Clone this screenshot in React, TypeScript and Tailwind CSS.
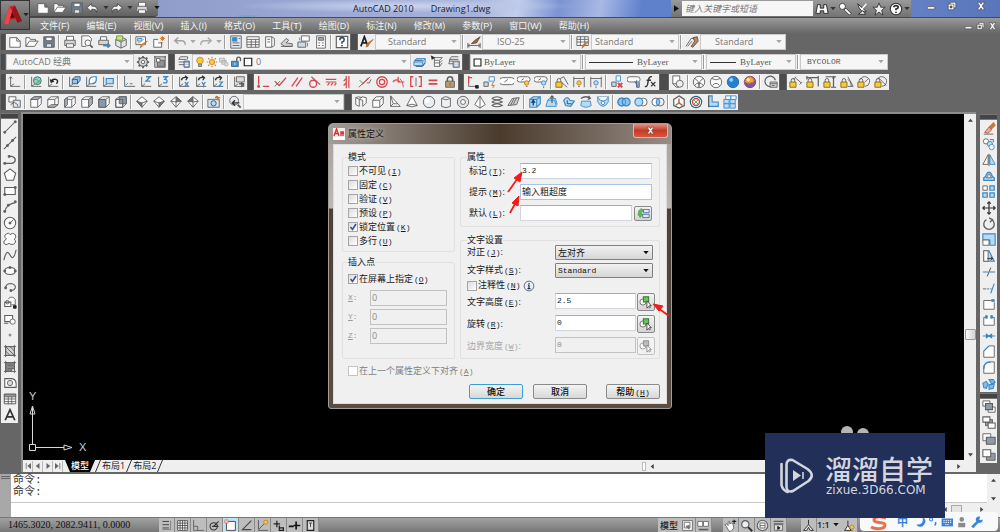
import React from "react";

type Shape = [d: string, stroke?: string, fill?: string, width?: number];

const K = "#5e5e5e";
const W = "#fdfdfd";
const B = "#3c88c6";
const LB = "#b5dbf5";
const R = "#d6464b";
const O = "#c9772c";
const Y = "#f5cb3c";
const G = "#4f9e4a";

const c = (x: number, y: number, r: number) =>
  `M${x - r} ${y}a${r} ${r} 0 1 0 ${2 * r} 0a${r} ${r} 0 1 0 ${-2 * r} 0z`;
const r = (x: number, y: number, w: number, h: number) => `M${x} ${y}h${w}v${h}h${-w}z`;

const axes: Shape = ["M3 2v11h11M3 13l4-3", K];
const lockBody: Shape = [r(1, 8, 7, 6), "#8a6414", Y];
const lockArm: Shape = ["M2.5 8V6a2 2 0 0 1 4 0v2", K];
const bulb = (x: number, y: number): Shape[] => [
  [c(x, y, 2.5), O, Y],
  [`M${x - 1} ${y + 4}h2`, K],
];
const cube: Shape = ["M2 5l4-3h8v8l-4 4H2zM2 5h8v9M10 5l4-3", K, W];

const icons: Record<string, Shape[]> = {
  new: [["M2 3h8l4 4v7H2zM10 3v4h4", K, W]],
  open: [["M1 13V3h4l1 2h6v2M1 13l4-6h10l-4 6z", K, W]],
  save: [["M2 2h12v12H2z", K, "#6c7f99"], [r(4.5, 2.5, 7, 4), K, W], [r(5, 10, 6, 4), K, "#e6e6e6"]],
  print: [["M4 6V1.500h8V6", K, W], ["M2 6h12v6H2z", K, "#d4d4d4"], [r(4, 10, 8, 4), K, W]],
  preview: [["M2 1h8l3 3v3M2 1v12h5", K, W], [c(9, 9, 3.3), K, W], ["M11.500 11.500l3 3", K, "none", 2]],
  publish: [["M4 6V2h7v4", K, W], [r(2, 6, 11, 5), K, "#d4d4d4"], ["M7 12h7M12 9.500l2.500 2.500-2.500 2.500", B, "none", 2]],
  dwf: [["M2 5l6-3 6 3v7l-6 3-6-3z", K, "#dfe6ef"], ["M2 5l6 3v7M8 8l6-3", K], [r(3, 1, 7, 5), G, "#e8d96a"]],
  match: [[r(1, 2, 11, 9), K, W], [r(3, 4, 5, 3), B, LB], ["M14 7l-5 5-3 3 1-4z", O, "#d99a4e"], ["M3 9h3M9 5h1", O]],
  block: [["M2 5v9h9V8M2 5h5M7 9h5", K, W], ["M12 1v6M9 4h6M10 2l4 4M14 2l-4 4", O]],
  undo: [["M6 3L2 6.500 6 10M2 6.500h8q4 0 4 5", "#a2a2a2", "none", 1.6]],
  redo: [["M10 3l4 3.500-4 3.500M14 6.500H6q-4 0-4 5", "#acacac", "none", 1.6]],
  props: [[r(2, 1, 12, 14), K, "#dfeaf5"], [r(4, 3, 5, 4), B, B], ["M4 9h8M4 12h8M11 4h2", K]],
  center: [[r(1, 2, 14, 12), K, W], ["M1 5h14M6 5v9M11 5v9M1 8h14M1 11h14", K]],
  palettes: [["M3 2h7v12H3zM10 2l3 2v8l-3 2", K, W], ["M5 5h3M5 8h3", K]],
  sheets: [["M1 10l6-6 3 2-3 3 7 1v3H5z", K, "#d2d2d2"], ["M1 13h13", K]],
  markup: [[r(5, 1, 9, 6), K, W], [r(1, 8, 9, 6), K, "#c9daea"], ["M12 9v4M3 3v3", B]],
  calc: [[r(3, 1, 10, 14), K, W], [r(5, 3, 6, 3), K, "#9bb0c4"], ["M5 9h2M9 9h2M5 12h2M9 12h2", K]],
  help: [[r(1.5, 1.5, 13, 13), K, W, 1.3], ["M5.500 6q0-3 2.500-3t2.500 2.500Q10.500 7.500 8 8v2M8 11.500v1.500", "#3a4a60", "none", 1.8]],
  textstyle: [["M1 13L5 2l4 11M2.500 9h5", "#222", "none", 2], ["M15 5l-5 6-3 3 1-4z", O, "#b86d35"]],
  dimstyle: [["M1 9v6M15 9v6M1 12h14M3 10.500L1 12l2 1.500M13 10.500l2 1.500-2 1.500", K], ["M15 2L9 6l-4 4 6-1z", "#6b4a33", "#9a6a48"]],
  tablestyle: [[r(1, 2, 13, 10), K, W], ["M1 5h13M5 2v10M10 2v10M1 8h13", K], ["M15 7l-4 4-4 4 1-4z", O, "#b86d35"]],
  mleader: [["M1 13L7 4h3M3 13l5-6", K], ["M9 3l5-1 1 5-6 7-2-1 4-6z", "#6b4a33", "#b88860"]],
  gear: [[c(8, 8, 5), K, "#d8d8d8", 1.3], [c(8, 8, 2), K, W], ["M8 1v2M8 13v2M1 8h2M13 8h2M3 3l1.500 1.500M11.500 11.500L13 13M13 3l-1.500 1.500M4.500 11.500L3 13", K, "none", 2]],
  workspace: [[r(2, 2, 12, 12), K, "#c8c8c8"], [r(5, 6, 8, 7), K, "#8d9298"], [r(4, 4, 4, 4), K, W], ["M1 1l2 2M15 1l-2 2", K]],
  layers: [["M2 5h9M2 8h7M2 11h6M4 2h8M4 2L2 5M12 2v3", K], [r(8, 7, 6, 7), "#47597a", "#9fb4d0"], ["M9 10h4M9 12h4", W]],
  bulb: [[c(8, 6, 4.5), O, Y], [r(6, 11, 4, 3), K, "#b8b8b8"]],
  sun: [[c(8, 8, 3.5), O, Y], ["M8 1v2M8 13v2M1 8h2M13 8h2M3 3l1.500 1.500M11.500 11.500L13 13M13 3l-1.500 1.500M4.500 11.500L3 13", O, "none", 1.5]],
  vpfreeze: [["M2 3h7v5H2zM5 6h6v5H5z", "#aaa", "#ddd"], [c(11, 11, 2.5), "#aaa", "#ddd"]],
  unlock: [[r(2, 7, 9, 7), "#205b8e", "#4d94cd"], ["M9 7V4a2.500 2.500 0 0 1 5 0v3", K, "none", 1.8], ["M6.500 9v3", W]],
  square: [[r(3, 3, 10, 10), "#222", W, 1.6]],
  layercur: [["M4 4h10l-3 4H1zM1 8v4h10V8M11 12l3-4V4", B, LB], ["M3 13h8l3-4M2 6h9", "#1c4c7a"]],
  layerprev: [["M5 3h9l-3 3H5zM5 6v3h6l3-3M5 9v4h6l3-4M11 13V6", K, W], ["M1 1l4 2-3 2", "#222", "#222"]],
  layerstate: [["M5 2h8M3 5h10M5 2L3 5v2h4M3 7l-1 3h5", K], [r(7, 7, 7, 7), K, "#b9c4d2"], ["M9 10h3M9 12h3", W]],
  ucs: [axes, ["M1 4l2-2 2 2", K]],
  ucsworld: [axes, [c(9.5, 6.5, 4.5), "#2d6e86", "#9bd0c4"], ["M6 6q3-3 4 0t3-1M9 11q-1-4 3-3", G]],
  ucsprev: [axes, ["M6 8q1-4 5-3t1 5M5 5l1 3 3-1", "#222", "none", 1.6]],
  ucsface: [axes, ["M6 5l3-3h6v4l-3 4H6zM6 5h6v5", "#24567f", "#9ac3e4"]],
  ucsobj: [axes, ["M6 9V6q1-4 5-4h3v4q-1 4-5 4H6z", B, W, 1.4]],
  ucsview: [axes, [r(6, 4, 8, 6), B, LB, 1.3]],
  ucsorigin: [["M3 1v12h12M9 10h3", K], ["M4 12l3-3", B]],
  ucsz: [axes, ["M8 2h5l-5 5h5", B, "none", 1.6]],
  ucs3: [axes, ["M8 2h5l-3 3q4 0 2 4H8", B, "none", 1.5]],
  ucsx: [axes, ["M5 6q1-4 6-3M9 1l3 2-2 3", "#333", "none", 1.5], ["M9 8l4 5M13 8l-4 5", B, "none", 1.4]],
  ucsy: [axes, ["M5 6q1-4 6-3M9 1l3 2-2 3", "#333", "none", 1.5], ["M9 8l2 3 2-3M11 11v3", B, "none", 1.4]],
  ucszr: [axes, ["M5 6q1-4 6-3M9 1l3 2-2 3", "#333", "none", 1.5], ["M9 8h4l-4 5h4", B, "none", 1.4]],
  ucsapply: [axes, [r(5, 2, 9, 6), K, "#ddd"], ["M8 10h6M11 8v5l3-2", K, "none", 1.5]],
  pCoin: [["M3 1v10M3 13h1M8 13h7", R, "none", 1.5], [r(2, 12, 2, 2), R, R]],
  pPerp: [["M2 7l5 5 8-9", R, "none", 1.5], ["M2 13l6-6", K]],
  pPar: [["M2 13L9 3M7 13l7-10", R, "none", 1.5]],
  pTan: [[c(7, 10, 4), R, "none", 1.5], ["M5 2l10 9", R, "none", 1.4]],
  pHor: [["M2 5h12M2 8h12M4 12l2-3M8 12l2-3M12 12l2-3", R, "none", 1.4]],
  pVer: [["M6 1v14M9 1v14M3 12l3-3M3 7l3-3", R, "none", 1.4]],
  pCol: [["M1 14L12 3M2 6l4 4", K], ["M5 11L14 2", R], ["M10 9h3l2-4", K]],
  pCon: [[c(8, 8, 6), R, "none", 1.5], [c(8, 8, 3), R, "none", 1.4]],
  pSmo: [["M1 8q4-5 8 0M7 2v6h7", R, "none", 1.4], ["M9 4q4 4 4 10", R]],
  pSym: [["M5 2H2v11h3M11 2h3v11h-3", R, "none", 1.5], ["M8 3v10", K]],
  pEq: [["M3 6h10M3 10h10", R, "none", 2]],
  lock: [[r(3, 7, 10, 7), K, "#b79d6c"], ["M5 7V5a3 3 0 0 1 6 0v2", K, "none", 1.8], ["M8 9v3", K]],
  autoc: [["M3 1v8M3 3h4", R, "none", 1.5], ["M3 9v4h9", K], [r(11, 12, 3, 3), "#222", "#222"]],
  autocon: [[r(1, 8, 5, 5), K, LB], [r(7, 2, 6, 5), B, W], ["M12 8l-2 4h3l-2 3", O, Y]],
  conshow: [["M3 3h10a2 2 0 0 1 0 8H3a2 2 0 0 1 0-8zM5 8l4-3", K, W]],
  conall: [["M3 2h9a2 2 0 0 1 0 6H3a2 2 0 0 1 0-6zM5 6l3-2", K, W], ...bulb(11, 9)],
  conhide: [["M3 2h9a2 2 0 0 1 0 6H3a2 2 0 0 1 0-6zM5 6l3-2", K, W], [c(11, 9, 2.5), B, LB], ["M11 13v2", K]],
  dimlock: [lockArm, lockBody, ["M6 4l4-2 5 9M8 9l6 5", K]],
  dimshow: [["M2 2v12M14 2v12M2 4h12", K], ...bulb(8, 9)],
  dimhide: [["M2 2v12M14 2v12M2 4h12", K], [c(8, 9, 2.5), B, LB], ["M8 13v2", K]],
  condel: [[r(2, 8, 5, 5), K, LB], [r(7, 1, 5, 6), B, W], ["M9 9l5 5M14 9l-5 5", R, "none", 2.2]],
  conset: [["M3 2h9a2 2 0 0 1 0 6H3a2 2 0 0 1 0-6z", K, W], ["M9 7l3 6M11 6v8h3V8", "#3d5f84", "#9db6cf"]],
  fx: [["M9 2q-3-1-4 4l-1 5q-1 3-3 2M3 6h5", "#333", "none", 1.6], ["M8 8l5 5M13 8l-5 5", "#333", "none", 1.3]],
  vs2d: [[r(2, 1, 8, 9), K, W], [c(10, 10, 4), K, "#eee"], ["M2 10l4 4h3", K]],
  vswire: [[c(8, 8, 6.5), K, W], ["M3 4q5 2 5 10M13 4q-5 2-5 10M3 12q5-6 10 0", K]],
  vshide: [[c(8, 8, 6.5), K, W], ["M3 4q5 3 10 0M4 12q4-5 8 0", K]],
  vsreal: [[c(8, 8, 6.5), "#1767b2", "#2280d3"], [c(6, 5.5, 2), "#7dbcf0", "#a4d2f7"]],
  vscon: [[c(8, 8, 6.5), "#7a3f87", "#7c55a8"], ["M2 8q1-6 7-6 5 3 3 6-5 3-10 0z", O, "#f2a23c"], [c(6, 5.5, 1.5), "#ffe9a0", "#ffe9a0"]],
  vsman: [["M9 13A6 6 0 1 1 13 6", K, "none", 1.4], ["M7 8h8v6H7z", K, "#d8d8d8"], ["M7 10h8M9 12h3", K]],
  dAl: [lockArm, lockBody, ["M7 3l7 6M5 5l3-3M12 11l3-3", K]],
  dHo: [lockArm, lockBody, ["M1 1v4M14 1v12M1 3h13", K, "none", 1.4]],
  dVe: [lockArm, lockBody, ["M3 2h12M9 14h6M12 2v12M11 4l1-2 1 2", K, "none", 1.4]],
  dAn: [lockArm, lockBody, ["M9 13h6L9 2M9 5q4 2 4 8", K]],
  dRa: [["M4 5a5.500 5.500 0 1 1 5 8M9 8l4-4", K], lockArm, lockBody],
  dDi: [["M4 5a5.500 5.500 0 1 1 5 8M5 3l9 9", K], lockArm, lockBody],
  named: [[r(1, 2, 8, 6), K, W], [r(6, 6, 8, 8), K, "#dfe8f0"], ["M3 11l5-3M8 9l3 2v2", K]],
  vTop: [cube, ["M2 5l4-3h8l-4 3z", K, "#a9b7c7"]],
  vBot: [cube, ["M2 14l4-3h8l-4 3z", K, "#a9b7c7"]],
  vLeft: [cube, ["M2 5l3-2v8l-3 3z", K, "#a9b7c7"]],
  vRight: [cube, ["M10 5l4-3v8l-4 4z", K, "#a9b7c7"]],
  vFront: [cube, [r(2, 5, 8, 9), K, "#8998aa"]],
  vBack: [cube, [r(6, 2, 8, 8), K, "#8998aa"], [r(2, 5, 8, 9), K]],
  iSW: [["M8 2l6 5-6 7-6-7z", K, W], ["M2 7l6 2v5z", K, "#6d7784"], ["M8 9l6-2", K]],
  iSE: [["M8 2l6 5-6 7-6-7z", K, W], ["M14 7L8 9v5z", K, "#6d7784"], ["M8 9L2 7", K]],
  iNE: [["M8 2l6 5-6 7-6-7z", K, W], ["M8 2v6l6-1z", K, "#6d7784"], ["M8 8L2 7M8 8v6", K]],
  iNW: [["M8 2l6 5-6 7-6-7z", K, W], ["M8 2v6L2 7z", K, "#6d7784"], ["M8 8l6-1M8 8v6", K]],
  camera: [[r(1, 5, 13, 9), K, "#d8e2ec"], [c(7.5, 9.5, 3), "#24567f", LB], ["M12 1v5M9 3h6M10 1l4 5", O, "none", 1.4]],
  zoomprev: [[c(7, 6.5, 5), K, "#e6edf4"], ["M11 11l3.500 3.500", K, "none", 2.2], ["M5 9h8M8 6L5 9l3 3", "#333", "none", 1.7]],
  polysolid: [["M2 3l4 2v8L2 11zM6 5l3-3 5 1v6l-4 4V6L6 5", K, W], ["M2 3l3-1 4 1", K]],
  box: [["M2 6l4-4h8v8l-4 4H2zM2 6h8v8M10 6l4-4", K, W]],
  wedge: [["M3 1v12h11z", K, W], ["M3 1l3 9M3 13l3-3h5", K]],
  cone: [["M8 1L2 12q6 3 12 0z", K, W], ["M2 12q6-3 12 0", K]],
  sphere: [[c(8, 8, 6.5), K, "#e9eef3"], [c(6, 6, 2.5), W, W]],
  cyl: [["M3 4v9q5 3 10 0V4q-5-4-10 0zM3 4q5 3 10 0", K, "#eef1f4"]],
  torus: [[c(8, 8, 6.5), K, "#e4e8ed"], [c(8, 8, 2.8), K, W]],
  pyramid: [["M8 1L2 11l6 4 6-4zM8 1v14", K, W]],
  helix: [["M2 4q6-4 12 0-6 3-12 0M2 8q6-4 12 0-6 3-12 0M2 12q6-4 12 0-6 3-12 0", K, "none", 1.2]],
  planar: [["M1 12L6 4l8-1-3 8zM4 12l4-8M7 11l4-8", K, "#ccd2d8"]],
  extrude: [[cube[0], B, LB, 1.3], ["M6 12V7M4 9l2-3 2 3", "#17436b", "none", 1.5]],
  presspull: [["M3 6h8l2 7H1zM3 6l2-2h7l2 7", B, LB], ["M8 9V1M6 3l2-2 2 2", K, "none", 1.4]],
  sweep: [["M2 6q4-6 7 0l5 1-4 6-6-1z", B, LB, 1.4], ["M6 6v4h5", "#17436b"]],
  revolve: [["M3 7h10l1 5q-6 4-12 0z", B, LB], ["M2 4q6-4 11 0M11 1l2 3-3 1", K, "none", 1.4]],
  loft: [["M2 2h12v6q-6 10-12 0z", B, LB], ["M2 2q2 5 6 5t6-5", B, W], [c(8, 9, 2), B, W]],
  union: [[c(5.5, 8, 4.5), B, "#8cc4ee", 1.4], [c(10.5, 8, 4.5), B, "#8cc4ee", 1.4], [c(5.5, 8, 4.5), B]],
  subtract: [[c(10.5, 8, 4.5), K, W], [c(5.5, 8, 4.5), B, LB, 1.3]],
  intersect: [[c(5.5, 8, 4.5), K, W], [c(10.5, 8, 4.5), K], ["M8 4q4 4 0 8-4-4 0-8z", B, "#8cc4ee"]],
  orbit3: [["M8 1l6 4v7l-6 3-6-3V5z", K, W, 1.4], ["M8 4v5l4 3", R, "none", 1.6], ["M8 9l-4 3", G, "none", 1.6]],
  gizmo: [[c(8, 8, 6.5), "#2a6a7a", W, 1.3], [c(8, 8, 4), R, "none", 1.6], ["M5 5l6 6M11 5l-6 6", G]],
  align3: [["M3 1h4v7h7v5H3z", B, LB, 1.3], ["M3 14V1", K, "none", 1.4]],
  array3: [[r(1, 5, 6, 5), B, LB], [r(8, 5, 6, 5), B, LB], [r(3, 1, 6, 4), B, W], [r(9, 1, 6, 4), B, W], [r(1, 10, 6, 5), B, LB], [r(8, 10, 6, 5), B, LB]],
  line: [["M2 14L14 2", K, "none", 1.2], [r(1, 13, 2, 2), K, K], [r(13, 1, 2, 2), K, K]],
  xline: [["M1 15L15 1", K, "none", 1.2], [r(4, 10, 2, 2), K, K], [r(10, 4, 2, 2), K, K]],
  pline: [["M1 13h6M7 13h3q4-1 4-4t-4-4H7", K, "none", 1.4], [r(1, 12, 2, 2), K, K], [r(6, 4, 2, 2), K, K]],
  polygon: [["M8 1l6.500 5-2.500 8H4L1.500 6z", K, W, 1.2]],
  rect: [[r(2, 4, 12, 8), K, W, 1.3], [r(1, 11, 2, 2), K, K], [r(13, 3, 2, 2), K, K]],
  arc: [["M2 14q1-9 12-11", K, "none", 1.3], [r(1, 12, 2, 2), K, K], [r(5, 5, 2, 2), K, K], [r(13, 1, 2, 2), K, K]],
  circle: [[c(8, 8, 6.5), K, W, 1.2], [r(7, 7, 2, 2), K, K], ["M8 8l4-4", K]],
  revcloud: [["M4 8q-4-3 0-6 3-2 4 1 3-3 6 0 2 3-1 5 3 4-1 6-3 1-5-1-4 3-6 0-1-3 3-5z", K, W, 1.1]],
  spline: [["M1 14Q4 0 8 8T15 2", K, "none", 1.3]],
  ellipse: [["M2 8q0-4 6-4t6 4-6 4-6-4z", K, W, 1.2], [r(1, 7, 2, 2), K, K], [r(13, 7, 2, 2), K, K], [r(7, 3, 2, 2), K, K]],
  ellarc: [["M3 8q1-4 6-4 6 1 5 5-1 3-5 3", K, "none", 1.3], [r(2, 8, 2, 2), K, K], [r(8, 11, 2, 2), K, K]],
  insert: [["M6 3q5-4 8 1v6h-4", K, W], [r(2, 7, 7, 5), K, W, 1.2], [c(5, 7, 2), K], [r(12, 11, 3, 3), "#222", "#222"]],
  mkblock: [[r(2, 4, 9, 7), K, W, 1.2], [c(11, 11, 3), K, W], ["M1 13h5", K]],
  point: [[r(7, 7, 2, 2), "#888", "#888"]],
  hatch: [[r(3, 3, 10, 10), K, "#d4d4d4"], ["M1 3h14M3 1v14M13 1v14M1 13h14M3 8l5 5M3 3l10 10M8 3l5 5", K]],
  gradient: [[r(3, 3, 10, 10), K, "#888"], ["M1 3h14M3 1v14M13 1v14M1 13h14M5 10h8M5 6h6", K], [r(10, 10, 3, 3), K, W]],
  region: [["M2 3h7q6 0 6 6v4H2z", K, W, 1.2], [c(8, 8, 3), K, "#ddd"]],
  table: [[r(1.5, 2.5, 13, 11), K, W, 1.1], [r(1.5, 2.5, 13, 3), K, "#999"], ["M6 5v9M10 5v9M1 8h13M1 11h13", K]],
  mtext: [["M2.500 14L8 2l5.500 12M4.500 10h7", "#333", "none", 2]],
  erase: [["M14 2l-6 6M15 4L9 10", O, "none", 2.3], ["M8 7l3 3-4 4-4-1z", "#a55", "#e8b08a"], ["M2 15h11", K]],
  copy: [[c(4.5, 5, 3), K, W], [c(9, 8, 3), B, LB], [c(11, 11.5, 3), B, W], ["M9 3h4v3", K]],
  mirror: [["M7 2v11H1z", K, W], ["M9 2v11h6z", B, LB], ["M8 1v14", K]],
  offset: [["M2 13h12v-3q-3-1-3-4-3-5-6 0 0 3-3 4z", B, LB, 1.4], ["M5 10q2-1 2-4 1-1 2 0 0 3 2 4z", K, W]],
  array: [[r(1, 1, 5, 5), K, W], [r(9, 1, 5, 5), B, LB, 1.4], [r(1, 9, 5, 5), B, LB, 1.4], [r(9, 9, 5, 5), B, LB, 1.4]],
  move: [["M8 1v14M1 8h14M6 3l2-2 2 2M6 13l2 2 2-2M3 6L1 8l2 2M13 6l2 2-2 2", "#333", "none", 1.4]],
  rotate: [["M11 3A6 6 0 1 1 5 3M8 1l4 2-3 3", K, "none", 1.5]],
  scale: [["M1 1h14v13H9V8H1z", B, LB, 1.3], [r(1, 8, 7, 6), K, W]],
  stretch: [["M2 14V2h6l6 12z", B, LB, 1.3], [r(2, 2, 5, 12), K, W], ["M6 11h6M10 9l2 2-2 2", "#222"]],
  trim: [["M1 8h6M9 8h6", B, "none", 1.4], ["M6 13l4-10", K, "none", 1.2]],
  extend: [["M1 9h4M6 9h2", K], ["M9 9h2", B], ["M10 14l4-11", B, "none", 1.3]],
  brkpt: [["M11 4H2v10h12V6", K, W], [r(11, 3, 3, 2), B, B]],
  brk: [["M4 5H2v9h12V5h-2", K, W], [r(4, 3, 2, 3), B, B], [r(10, 3, 2, 3), B, B]],
  join: [["M1 8h14M5 6l3 2-3 2zM11 6L8 8l3 2z", B, B, 1.2]],
  chamfer: [["M2 14V7l6-6h6v13z", K, W], ["M2 7l6-6", B, "none", 1.5]],
  fillet: [["M2 14V9q0-8 8-8h4v13z", K, W], ["M2 9q0-8 8-8", B, "none", 1.5]],
  explode: [["M1 7l4-2 2 3-2 5-3-1zM8 3h5l2 3-4 2zM8 9l6-1-1 5-5 1z", B, "#7fbbe8", 1.2]],
  toFront: [[r(1, 1, 8, 6), K, W], [r(7, 8, 8, 6), K, W], [r(4, 4, 8, 7), K, "#8f9aa8", 1.2]],
  toBack: [[r(4, 4, 8, 7), K, "#8f9aa8"], [r(1, 1, 8, 6), K, W, 1.2], [r(7, 8, 8, 6), K, W, 1.2]],
  above: [[r(1, 2, 9, 8), K, W], [r(5, 6, 10, 8), K, "#8f9aa8", 1.2]],
  under: [[r(5, 6, 10, 8), K, "#8f9aa8"], [r(1, 2, 9, 8), K, W, 1.2]],
  snap: [["M3 3h8M3 7h8M3 11h8", "#444", "none", 1.2], ["M13 2v11H3", "#777"]],
  grid: [[r(2, 2, 12, 12), "#444", W], ["M2 5h12M2 8h12M2 11h12M5 2v12M8 2v12M11 2v12", "#444"]],
  ortho: [["M2 1v13h13M2 9h5v5", "#666", "none", 1.2]],
  polar: [[c(7, 9, 4.5), "#333", "none", 1.3], ["M7 9l6-6M5 9h8", "#333", "none", 1.4]],
  osnap: [[r(3, 3, 11, 11), "#4e4e4e", W, 1.2], [r(1, 1, 4, 4), "#d77", "#fcc"]],
  otrack: [["M14 2L3 13h11", "#444", "none", 1.4]],
  ducs: [["M3 1v13h12M3 13l8-8", K, "none", 1.2], [c(12, 4, 2.5), O, Y]],
  dyn: [["M2 6h8M6 2v8M9 8v6h5v-3H9", "#222", "none", 1.5]],
  lwt: [["M1 9h6M7 8h8M10 3v10", "#111", "none", 2]],
  qp: [[r(4, 2, 8, 12), "#222", "#ddd", 1.4], ["M6 5h4M8 5v5", "#333"]],
  layout: [[r(2, 2, 12, 12), K, W], [r(4, 4, 7, 7), K], ["M6 9l4 3V8z", K, "#888"]],
  quick: [[r(1, 3, 6, 6), K, W], [r(8, 3, 6, 6), K, W], ["M2 13h12", K, "none", 2]],
  pan: [["M3 9l-2-2 2-1 2 2V4l2-1v3l2-1 2 1 1 5-3 4H6z", K, W], ["M10 3h5M12.500 1v5", "#222", "none", 1.4]],
  zoom: [[c(6.5, 6.5, 4.5), K, "#e7eef4", 1.5], ["M10 10l5 5", "#333", "none", 2.6]],
  wheel: [[c(8, 8, 6.5), K, "#ddd", 1.3], [r(5, 5, 6, 6), K, W], ["M5 8h6", K]],
  motion: [["M2 3h12M2 6h12", K, "none", 1.5], [r(3, 7, 10, 7), K, "#ddd"], ["M7 9l3 2-3 2z", "#222", "#222"]],
  anno: [["M8 1v6M8 7l-6 7h4l2-4 2 4h4z", "#333", "#f4f4f4", 1.2]],
  annovis: [["M6 2v6M6 8l-4 6h8z", "#333", "#f4f4f4", 1.2], ...bulb(11, 10)],
  insertfield: [["M6 2Q1 3 2 9l-1 0 3 4 3-4H5q0-3 3-4z", G, "#62b85d"], [r(8, 3, 7, 4), "#3c63a3", "#dfe8f6"], [r(7, 9, 8, 4), "#3c63a3", "#dfe8f6"]],
  pick: [[c(4.5, 8, 3.5), "#666", W], [r(5, 2, 6, 6), "#3a7a3a", "#70bd5c", 1.2], ["M9 7v8l2-2 1 2 1-1-1-2h2z", "#444", W]],
  pickoff: [[c(4.5, 8, 3.5), "#999", W], [r(5, 2, 6, 6), "#888", "#bbb"], ["M9 7v8l2-2 1 2 1-1-1-2h2z", "#888", W]],
  info: [[c(8, 8, 6.5), "#44506a", "#e9eef6", 1.1], ["M8 4v1.500M6.500 7H8v4.500M6 11.500h4", "#222c44", "none", 1.6]],
  binoc: [["M3 3h3v4h4V3h3l2 10h-5v-3H6v3H1z", "#222", W, 1]],
  key: [[c(5, 5, 3.5), "#333", W], ["M7 9l2-2 6 6-2 2z", "#333", W]],
  sat: [["M3 2l10 9q-7 2-10-9z", "#222", W], ["M8 8l5-6", W, "none", 1.5], ["M4 14h8l-3-4z", "#222", W]],
  star: [["M8 1l2 5h5l-4 3.500 1.500 5.500L8 11.500 3.500 15 5 9.500 1 6h5z", "#333", "#eee"]],
  helpw: [[c(8, 8, 6.5), "#333", W, 1.2], ["M5.500 6q0-2 2.500-2t2.500 2Q10.500 7.500 8 8v1.500M8 11v1.500", "#333", "none", 2]],
  min: [["M2 9h12v4H2z", "#444", W]],
  restore: [["M5 2h9v9H5z", "#444", W], ["M2 5h9v9H2z", "#444", W], [r(5, 8, 3, 3), "#444", "#666"]],
  close: [["M2 2h4l2 3 2-3h4l-4 6 4 6h-4l-2-3-2 3H2l4-6z", "#444", W]],
};

function Icon({ n, className = "h-[14px] w-[14px]" }: { n: string; className?: string }) {
  return (
    <svg viewBox="0 0 16 16" className={`shrink-0 ${className}`} aria-hidden="true">
      {(icons[n] ?? []).map(([d, stroke = K, fill = "none", width = 1], i) => (
        <path key={i} d={d} stroke={stroke} fill={fill} strokeWidth={width} />
      ))}
    </svg>
  );
}

function Tool({ n }: { n: string }) {
  return (
    <button type="button" aria-label={n} className="flex h-[16px] w-[17px] shrink-0 items-center justify-center">
      <Icon n={n} />
    </button>
  );
}

const Sep = () => <span className="mx-px h-[14px] w-[2px] shrink-0 self-center border-l border-[#9c9c9c] bg-white" />;
const Grip = ({ className = "w-2" }: { className?: string }) => (
  <span className={`shrink-0 self-stretch border-x border-[#666] bg-[#4c4c4c] ${className}`} />
);
const Caret = ({ className = "text-[#a5a5a5]" }: { className?: string }) => (
  <svg viewBox="0 0 8 6" className={`pointer-events-none h-[4px] w-[6px] shrink-0 ${className}`} aria-hidden="true">
    <path d="M0 0h8L4 5z" fill="currentColor" />
  </svg>
);

/** Tools are listed by name; "|" draws a separator. */
function Tools({ list }: { list: string }) {
  return (
    <div className="flex h-full shrink-0 items-center bg-[#efefef]">
      {list.split(" ").map((n, i) => (n === "|" ? <Sep key={i} /> : <Tool key={i} n={n} />))}
    </div>
  );
}

function Combo({ label, value, className, lead, text = "text-[#777]" }: {
  label: string; value: string; className: string; lead?: React.ReactNode; text?: string;
}) {
  return (
    <div className={`flex h-[16px] shrink-0 items-center border border-[#c9c9c9] bg-[#f6f6f6] pr-[3px] ${className}`}>
      {lead}
      <select aria-label={label} className={`h-[14px] min-w-0 flex-1 appearance-none bg-transparent leading-[14px] ${text}`}>
        <option>{value}</option>
      </select>
      <Caret />
    </div>
  );
}

const serif = "font-['Liberation_Serif',serif] text-[9px] text-[#555]";

function Header() {
  const menu = [["文件", "F"], ["编辑", "E"], ["视图", "V"], ["插入", "I"], ["格式", "O"], ["工具", "T"], ["绘图", "D"], ["标注", "N"], ["修改", "M"], ["参数", "P"], ["窗口", "W"], ["帮助", "H"]];
  return (
    <header className="flex bg-[#6d6d6d]">
      <button type="button" aria-label="Application menu" className="flex h-[30px] w-[30px] shrink-0 items-center gap-px border border-[#333] bg-linear-to-b from-[#8b8b8b] to-[#5c5c5c] pl-[3px]">
        <svg viewBox="0 0 20 24" className="h-[23px] w-[18px]" aria-hidden="true">
          <path d="M6 2l6-1 8 17-5 2-2-4-6 1-2 5-5-1z" fill="#c81f25" />
          <path d="M6 2l3 5-4 15-5-1z" fill="#f0444a" />
          <path d="M12 1l8 17-5 2L9 6z" fill="#96141a" />
          <path d="M9 8l3 6-5 1z" fill="#4f0b0e" />
        </svg>
        <Caret className="text-[#222]" />
      </button>
      <div className="min-w-0 flex-1">
        <div className="flex h-[17px] items-stretch bg-linear-to-r from-[#8694c5] via-[#aab5dd] to-[#5577c2]">
          <div className="flex w-[128px] shrink-0 items-center rounded-br-sm border-b border-[#444] bg-linear-to-b from-[#8e8e8e] to-[#606060] pl-1">
            {["new", "open", "save"].map((n) => <Tool key={n} n={n} />)}
            <button type="button" aria-label="undo" className="flex w-[24px] items-center gap-1 text-[#333]"><QuickArrow /><Caret className="text-[#333]" /></button>
            <button type="button" aria-label="redo" className="flex w-[24px] items-center gap-1 text-[#333]"><QuickArrow redo /><Caret className="text-[#333]" /></button>
            <Tool n="print" />
            <Caret className="ml-1 text-[#111]" />
          </div>
          <div className="flex min-w-0 flex-1 items-center gap-[17px] bg-[radial-gradient(ellipse_at_31px_12px,#e2dcb4_0,#e2dcb4_7px,transparent_15px),radial-gradient(ellipse_at_90px_16px,#5f9fae_0,#6ba3b4_9px,transparent_18px),radial-gradient(ellipse_at_250px_6px,#cdd4ee_0,#bcc6e7_60px,transparent_170px),linear-gradient(100deg,transparent_62%,#c3cdec_70%,#7a93d2_78%,#a9b9e4_86%,#5f80cb_94%)] pl-[195px] leading-[17px] text-[#1c1c28]">
            <span>AutoCAD 2010</span>
            <span>Drawing1.dwg</span>
          </div>
          <div className="flex w-[240px] shrink-0 items-center bg-linear-to-b from-[#9a9a9a] to-[#727272]">
            <svg viewBox="0 0 6 8" className="mx-[3px] h-[7px] w-[5px]" aria-hidden="true"><path d="M0 0v8l6-4z" fill="#111" /></svg>
            <input aria-label="Search" placeholder="键入关键字或短语" className="h-[15px] w-[131px] bg-[#f6f6f6] px-[3px] italic placeholder:text-[#777]" />
            <Tool n="binoc" />
            <Caret className="text-[#333]" />
            {["key", "sat", "star", "helpw"].map((n) => <Tool key={n} n={n} />)}
            <Caret className="text-[#333]" />
          </div>
          <div className="flex w-[89px] shrink-0 items-start justify-end gap-[9px] bg-linear-to-r from-[#6481c6] to-[#5a76ba] pr-[13px]">
            {["min", "restore"].map((n) => (
              <button key={n} type="button" aria-label={n} className="p-px"><Icon n={n} className="h-[10px] w-[10px]" /></button>
            ))}
            <button type="button" aria-label="close" className="ml-2 p-px"><Icon n="close" className="h-[10px] w-[10px]" /></button>
          </div>
        </div>
        <nav className="flex h-[16px] items-center gap-[17px] border-t border-[#4a4a4a] bg-linear-to-b from-[#9a9a9a] to-[#686868] pl-[10px] font-['Liberation_Sans','Noto_Sans_CJK_SC',sans-serif] text-[#f4f4f4]">
          {menu.map(([t, k]) => (
            <button key={k} type="button" className="leading-[14px] whitespace-nowrap">{t}({k})</button>
          ))}
          <div className="ml-auto flex gap-[3px] pr-[3px]">
            {["min", "restore", "close"].map((n) => (
              <button key={n} type="button" aria-label={`${n} drawing`}><Icon n={n} className="h-[10px] w-[9px]" /></button>
            ))}
          </div>
        </nav>
      </div>
    </header>
  );
}

function QuickArrow({ redo = false }: { redo?: boolean }) {
  return (
    <svg viewBox="0 0 16 16" className="ml-px h-[13px] w-[13px]" aria-hidden="true">
      <path
        d={redo ? "M9 2l6 5-6 5V9H6q-3 0-3 4-3-8 6-8z" : "M7 2L1 7l6 5V9h3q3 0 3 4 3-8-6-8z"}
        fill="#f4f4f4" stroke="#444"
      />
    </svg>
  );
}

function Toolbars() {
  const tail = <button type="button" aria-label="history" className="flex h-full w-[9px] items-center justify-center bg-[#efefef]"><Caret /></button>;
  return (
    <div className="flex flex-col gap-1 overflow-hidden pt-px pb-0.5">
      <div className="flex h-[16px]">
        <Grip className="w-[6px]" />
        <Tools list="new open save | print preview publish dwf | match block | undo" />
        {tail}
        <Tools list="redo" />
        {tail}
        <Tools list="| props center palettes sheets markup calc | help" />
        <Grip className="w-[8px]" />
        <Tools list="textstyle" />
        <Combo label="Text style" value="Standard" className="w-[86px] pl-3" />
        <Tools list="| dimstyle" />
        <Combo label="Dimension style" value="ISO-25" className="w-[88px] pl-[14px]" />
        <Tools list="| tablestyle" />
        <Combo label="Table style" value="Standard" className="w-[88px] pl-[3px]" />
        <Tools list="| mleader" />
        <Combo label="Leader style" value="Standard" className="w-[86px] pl-[14px]" />
      </div>
      <div className="flex h-[16px]">
        <Grip className="w-[6px]" />
        <Combo label="Workspace" value="AutoCAD 经典" className="w-[128px] pl-[6px]" />
        <Tools list="gear workspace" />
        <Grip className="w-[7px]" />
        <Tools list="layers" />
        <Combo
          label="Layer" value="0" className="w-[219px] pl-px"
          lead={<span className="mr-[2px] flex">{["bulb", "sun", "vpfreeze", "unlock", "square"].map((n) => <Icon key={n} n={n} className="h-[12px] w-[12px]" />)}</span>}
        />
        <Tools list="layercur layerprev layerstate" />
        <Grip className="w-[8px]" />
        <Combo label="Color" value="ByLayer" className="w-[111px] pl-px" text={serif} lead={<Icon n="square" className="mr-px h-[11px] w-[11px]" />} />
        <Tools list="|" />
        <Combo label="Linetype" value="ByLayer" className="w-[117px] pl-[3px]" text={serif} lead={<span className="mr-1 h-px w-[44px] bg-[#333]" />} />
        <Tools list="|" />
        <Combo label="Lineweight" value="ByLayer" className="w-[90px] pl-[3px]" text={serif} lead={<span className="mr-1 h-px w-[26px] bg-[#333]" />} />
        <Tools list="|" />
        <Combo label="Plot style" value="BYCOLOR" className="w-[88px] pl-[6px]" text="font-['Liberation_Mono',monospace] text-[8px] text-[#555]" />
      </div>
      <div className="flex h-[16px]">
        <Grip className="w-[6px]" />
        <Tools list="ucs | ucsworld ucsprev | ucsface ucsobj ucsview | ucsorigin ucsz ucs3 | ucsx ucsy ucszr | ucsapply" />
        <Grip className="w-[7px]" />
        <Tools list="pCoin pPerp pPar pTan pHor pVer pCol pCon pSmo pSym pEq lock" />
        <Grip className="w-[6px]" />
        <Tools list="autoc autocon conshow conall conhide | dimlock dimshow dimhide | condel conset fx" />
        <Grip className="w-[10px]" />
        <Tools list="vs2d | vswire vshide vsreal vscon | vsman" />
        <Grip className="w-[8px]" />
        <Tools list="dAl dHo dVe dAn dRa dDi" />
      </div>
      <div className="flex h-[16px]">
        <Grip className="w-[6px]" />
        <Tools list="named | vTop vBot vLeft vRight vFront vBack | iSW iSE iNE iNW | camera | zoomprev" />
        <Combo label="View" value="" className="w-[101px]" />
        <Grip className="w-[8px]" />
        <Tools list="polysolid box wedge cone sphere cyl torus pyramid helix planar | extrude presspull sweep revolve loft | union subtract intersect | orbit3 gizmo align3 array3" />
      </div>
    </div>
  );
}

function SideTools({ list }: { list: string }) {
  return (
    <div className="flex flex-col items-center bg-[#efefef]">
      <span className="h-[6px] w-full border-y border-[#777] bg-[#444]" />
      {list.split(" ").map((n) => <Tool key={n} n={n} />)}
    </div>
  );
}

function ScrollArrow({ d, label }: { d: string; label: string }) {
  return (
    <button type="button" aria-label={label} className="flex h-[12px] w-[12px] shrink-0 items-center justify-center">
      <svg viewBox="0 0 8 8" className="h-[5px] w-[5px]" aria-hidden="true"><path d={d} fill="#444" /></svg>
    </button>
  );
}
const UP = "M0 6h8L4 1z";
const DOWN = "M0 2h8L4 7z";
const LEFT = "M6 0v8L1 4z";
const RIGHT = "M2 0v8l5-4z";

function Workspace() {
  return (
    <main className="flex min-h-0 flex-1 pb-[2px]">
      <div className="w-[18px] shrink-0 pt-px pl-px">
        <SideTools list="line xline pline polygon rect arc circle revcloud spline ellipse ellarc insert mkblock point hatch gradient region table mtext" />
      </div>
      <div className="mr-[4px] ml-[3px] flex min-w-0 flex-1 flex-col border-t-2 border-l-2 border-[#8c8c8c]">
        <div className="flex flex-1">
          <div className="flex flex-1 items-end bg-black pb-[2px]">
            <svg viewBox="0 0 66 70" className="h-[70px] w-[66px]" aria-label="UCS axes">
              <g fill="none" stroke="#d8d8d8">
                <path d="M6.500 56.500h6v6h-6zM9.500 56V19M13 59.500h28" />
                <path d="M9.500 18l-2.500 8h5zM49 59.500l-8-2.500v5z" />
              </g>
              <text x="6" y="12" fontSize="11" fill="#cfcfcf" fontFamily="Liberation Sans, sans-serif">Y</text>
              <text x="56" y="63" fontSize="11" fill="#cfcfcf" fontFamily="Liberation Sans, sans-serif">X</text>
            </svg>
          </div>
          <div className="flex w-[12px] flex-col items-center bg-[#efefef]">
            <ScrollArrow d={UP} label="Scroll up" />
            <span className="flex-[206]" />
            <span className="h-[11px] w-[11px] rounded-[1px] border border-[#999] bg-linear-to-r from-[#fafafa] to-[#d2d2d2]" />
            <span className="flex-[110]" />
            <ScrollArrow d={DOWN} label="Scroll down" />
          </div>
        </div>
        <div className="flex h-[12px] items-center bg-[#efefef]">
          {[["First", "M1 0h1v8H1zM8 0v8L3 4z"], ["Previous", LEFT], ["Next", RIGHT], ["Last", "M7 0H6v8h1zM0 0v8l5-4z"]].map(([l, d]) => (
            <button key={l} type="button" aria-label={l} className="flex h-[11px] w-[10px] items-center justify-center border-r border-[#bbb]">
              <svg viewBox="0 0 8 8" className="h-[6px] w-[6px]" aria-hidden="true"><path d={d} fill="#666" /></svg>
            </button>
          ))}
          <button type="button" className="ml-0.5 h-[12px] bg-black px-[6px] leading-[12px] font-medium text-white [clip-path:polygon(0_0,100%_0,calc(100%-5px)_100%,5px_100%)]">模型</button>
          <Slash />
          <button type="button" className="px-px leading-[12px] text-[#222]">布局1</button>
          <Slash />
          <button type="button" className="px-px leading-[12px] text-[#222]">布局2</button>
          <Slash />
          <div className="ml-auto flex w-[334px] items-center">
            <span className="h-[9px] w-[4px] border border-[#bbb] bg-white" />
            <ScrollArrow d={LEFT} label="Scroll left" />
            <span className="flex-1" />
            <ScrollArrow d={RIGHT} label="Scroll right" />
            <span className="w-[12px]" />
          </div>
        </div>
      </div>
      <div className="flex w-[20px] shrink-0 flex-col pt-[2px] pr-[3px]">
        <SideTools list="erase copy mirror offset array move rotate scale stretch trim extend brkpt brk join chamfer fillet explode" />
        <div className="mt-px">
          <SideTools list="toFront toBack above under" />
        </div>
      </div>
    </main>
  );
}

const Slash = () => (
  <svg viewBox="0 0 6 12" className="h-[12px] w-[6px]" aria-hidden="true"><path d="M5.500 0L.5 12" stroke="#333" /></svg>
);

function CommandLine() {
  return (
    <section className="flex h-[43px] bg-white">
      <div className="w-[11px] shrink-0 bg-[#a8a8a8] pt-[2px]">
        <span className="mx-px block h-[3px] border-y border-[#666]" />
      </div>
      <div className="flex min-w-0 flex-1 flex-col font-['Liberation_Mono','Noto_Sans_CJK_SC',monospace] text-[11px] text-[#333]">
        <div className="h-[29px] border-b border-[#c8c8c8] pl-[2px] leading-[12px]">
          <p>命令:</p>
          <p>命令:</p>
        </div>
        <div className="flex">
          <input aria-label="Command" className="h-[13px] min-w-0 flex-1" />
          <div className="flex w-[48px] items-center bg-[#efefef]">
            <ScrollArrow d={LEFT} label="Scroll left" />
            <span className="h-[10px] w-[11px] border border-[#aaa] bg-[#e4e4e4]" />
            <span className="flex-1" />
            <ScrollArrow d={RIGHT} label="Scroll right" />
          </div>
        </div>
      </div>
      <div className="flex w-[13px] shrink-0 flex-col justify-between bg-[#efefef] pb-[13px]">
        <ScrollArrow d={UP} label="Scroll up" />
        <ScrollArrow d={DOWN} label="Scroll down" />
      </div>
    </section>
  );
}

function StatusButtons({ list }: { list: string }) {
  return (
    <div className="flex">
      {list.split(" ").map((n) => (
        <button
          key={n} type="button" aria-label={n}
          className={`flex h-[15px] w-[16px] items-center justify-center border-r border-[#8a8a8a] ${n === "osnap" ? "bg-[#bfe3f4]" : "bg-[#bdbdbd]"}`}
        >
          <Icon n={n} className="h-[13px] w-[13px]" />
        </button>
      ))}
    </div>
  );
}

function StatusBar() {
  return (
    <footer className="flex h-[15px] items-center border-t border-[#777] bg-linear-to-b from-[#a2a2a2] to-[#777] pl-2">
      <output className="w-[151px] shrink-0 font-['Liberation_Serif',serif] text-[10px] text-[#111]">1465.3020, 2082.9411, 0.0000</output>
      <StatusButtons list="snap grid ortho polar osnap otrack ducs dyn lwt qp" />
      <div className="ml-auto flex items-center pr-[142px]">
        <button type="button" className="h-[15px] w-[22px] bg-[#bdbdbd] leading-[15px] font-medium text-[#222]">模型</button>
        <StatusButtons list="layout quick" />
        <span className="w-[11px]" />
        <StatusButtons list="pan zoom wheel motion" />
        <span className="w-[14px]" />
        <StatusButtons list="anno" />
        <button type="button" className="flex h-[15px] w-[25px] items-center gap-[3px] bg-[#bdbdbd] font-semibold text-[#222]">1:1 <Caret className="text-[#111]" /></button>
        <StatusButtons list="annovis" />
      </div>
    </footer>
  );
}

const Key = ({ k }: { k: string }) => (
  <span className="ml-px font-['Liberation_Mono',monospace] text-[8px]">(<u>{k}</u>)</span>
);

function Check({ label, k, checked = false, disabled = false }: { label: string; k: string; checked?: boolean; disabled?: boolean }) {
  return (
    <label className={`flex h-[14px] w-fit items-center gap-px whitespace-nowrap ${disabled ? "text-[#808080]" : ""}`}>
      <span className="relative h-[10px] w-[10px]">
        <input type="checkbox" defaultChecked={checked} disabled={disabled} className="peer block h-[10px] w-[10px] appearance-none border border-[#a6a6a6] bg-linear-to-br from-[#dcdcdc] to-white disabled:border-[#c4c4c4] disabled:from-white" />
        <svg viewBox="0 0 10 10" className="pointer-events-none absolute inset-0 hidden h-[10px] w-[10px] peer-checked:block" aria-hidden="true">
          <path d="M2.500 5l2 2.500L8 2" fill="none" stroke="#3c4f9c" strokeWidth="1.6" />
        </svg>
      </span>
      <span>{label}<Key k={k} /></span>
    </label>
  );
}

function Group({ title, className, children }: { title: string; className: string; children: React.ReactNode }) {
  return (
    <fieldset className={`min-w-0 rounded-[2px] border border-[#e0e0e0] ${className}`}>
      <legend className="leading-[10px]">{title}</legend>
      {children}
    </fieldset>
  );
}

const mono = "font-['Liberation_Mono','Noto_Sans_CJK_SC',monospace] text-[8px]";
const field = "min-w-0 border border-[#d2d6dc] border-t-[#a9acb3] bg-white px-px pb-[2px] disabled:border-[#c2c2c2] disabled:bg-[#f0f0f0] disabled:text-[#8a8a8a]";

function Pick({ disabled = false }: { disabled?: boolean }) {
  return (
    <button type="button" aria-label="Pick on screen" disabled={disabled} className="flex h-[18px] w-[18px] shrink-0 items-center justify-center rounded-[2px] border border-[#8a8a8a] bg-linear-to-b from-[#f4f4f4] to-[#d4d4d4] disabled:border-[#c4c4c4] disabled:from-[#f4f4f4] disabled:to-[#f0f0f0]">
      <Icon n={disabled ? "pickoff" : "pick"} />
    </button>
  );
}

function DialogSelect({ id, value, className = "" }: { id: string; value: string; className?: string }) {
  return (
    <div className="flex h-[15px] w-[98px] items-center rounded-[1px] border border-[#808080] bg-linear-to-b from-[#f2f2f2] to-[#d6d6d6] pr-[3px] pl-[2px]">
      <select id={id} className={`h-[13px] min-w-0 flex-1 appearance-none bg-transparent leading-[13px] text-[#111] ${className}`}>
        <option>{value}</option>
      </select>
      <Caret className="text-[#111]" />
    </div>
  );
}

function AttributeDialog() {
  const button = "h-[15px] w-[54px] rounded-[2px] border bg-linear-to-b from-[#f4f4f4] to-[#d8d8d8] leading-[13px] font-medium text-[#111]";
  return (
    <div role="dialog" aria-label="属性定义" className="absolute top-[123px] left-1/2 w-[344px] -translate-x-1/2 rounded-t-[5px] rounded-b-[3px] border border-[#a39c97] bg-[linear-gradient(to_bottom,#a59e99_0,#bdb8b4_84px,#4c4038_85px,#5a4d44_100%)] text-[#1a1a1a]">
      <div className="flex h-[20px] items-center rounded-t-[4px] bg-linear-to-r from-[#a39c98] via-[#4a3b2d] to-[#978d86] pl-[4px]">
        <svg viewBox="0 0 12 12" className="h-[12px] w-[12px]" aria-hidden="true">
          <path d="M0 0h12v12H0z" fill="#f4e9e9" />
          <path d="M1 8L3.500 1 6 8M2 5.500h3M8 3v5M10 3v5M8 5h3" stroke="#cf2b33" strokeWidth="1.3" fill="none" />
          <path d="M0 9h12v3H0z" fill="#fff" />
        </svg>
        <h1 className="ml-[3px] text-[#111] [text-shadow:0_0_4px_#ddd]">属性定义</h1>
        <button type="button" aria-label="Close" className="mr-[3px] ml-auto flex h-[14px] w-[35px] items-center justify-center self-start rounded-b-[3px] border border-t-0 border-[#e4b3a8] bg-linear-to-b from-[#dd9384] via-[#c13a26] to-[#d9573c]">
          <Icon n="close" className="h-[9px] w-[9px]" />
        </button>
      </div>
      <form className="mx-[4px] mb-[4px] border border-[#ddd] bg-[#f0f0f0] pt-[7px] pr-[6px] pb-[4px] pl-[8px]">
        <div className="grid grid-cols-[113px_minmax(0,1fr)] gap-x-[5px]">
          <div>
            <Group title="模式" className="pt-[2px] pb-[3px] pl-[5px]">
              <Check label="不可见" k="I" />
              <Check label="固定" k="C" />
              <Check label="验证" k="V" />
              <Check label="预设" k="P" />
              <Check label="锁定位置" k="K" checked />
              <Check label="多行" k="U" />
            </Group>
            <Group title="插入点" className="mt-[5px] pt-[5px] pb-[14px] pl-[5px]">
              <Check label="在屏幕上指定" k="O" checked />
              <div className="mt-[4px] flex flex-col gap-[3px]">
                {["X", "Y", "Z"].map((a) => (
                  <div key={a} className="flex items-center">
                    <label htmlFor={`pt-${a}`} className={`w-[22px] text-[#9a9a9a] ${mono}`}><u>{a}</u>:</label>
                    <input id={`pt-${a}`} disabled defaultValue="0" className={`h-[16px] w-[77px] ${field}`} />
                  </div>
                ))}
              </div>
            </Group>
          </div>
          <div>
            <Group title="属性" className="pt-px pr-[7px] pb-[5px] pl-[6px]">
              <div className="grid grid-cols-[53px_minmax(0,1fr)] items-center gap-y-[5px]">
                <label htmlFor="tag" className="pl-[2px]">标记<Key k="T" />:</label>
                <input id="tag" defaultValue="3.2" className={`h-[16px] w-full ${field} ${mono}`} />
                <label htmlFor="prompt" className="pl-[2px]">提示<Key k="M" />:</label>
                <input id="prompt" defaultValue="输入粗超度" className="h-[16px] w-full border border-[#a9c6e6] bg-white px-px pb-[2px]" />
                <label htmlFor="default" className="pl-[2px]">默认<Key k="L" />:</label>
                <div className="flex items-center gap-[2px]">
                  <input id="default" className={`h-[16px] flex-1 ${field}`} />
                  <button type="button" aria-label="Insert field" className="flex h-[15px] w-[18px] items-center justify-center rounded-[2px] border border-[#8a8a8a] bg-linear-to-b from-[#f4f4f4] to-[#d4d4d4]">
                    <Icon n="insertfield" className="h-[13px] w-[13px]" />
                  </button>
                </div>
              </div>
            </Group>
            <Group title="文字设置" className="mt-[8px] pb-[3px] pl-[6px]">
              <div className="grid grid-cols-[88px_1fr] items-center gap-y-[3px]">
                <label htmlFor="justify">对正<Key k="J" />:</label>
                <DialogSelect id="justify" value="左对齐" />
                <label htmlFor="style">文字样式<Key k="S" />:</label>
                <DialogSelect id="style" value="Standard" className={mono} />
              </div>
              <div className="flex h-[15px] items-center gap-[3px]">
                <Check label="注释性" k="N" />
                <Icon n="info" className="h-[12px] w-[12px]" />
              </div>
              <div className="grid grid-cols-[88px_1fr] items-center gap-y-[4px]">
                <label htmlFor="height">文字高度<Key k="E" />:</label>
                <div className="flex gap-px">
                  <input id="height" defaultValue="2.5" className={`h-[16px] w-[81px] ${field} ${mono}`} />
                  <Pick />
                </div>
                <label htmlFor="rotation">旋转<Key k="R" />:</label>
                <div className="flex gap-px">
                  <input id="rotation" defaultValue="0" className={`h-[16px] w-[81px] ${field} ${mono}`} />
                  <Pick />
                </div>
                <label htmlFor="boundary" className="text-[#a6a6a6]">边界宽度<Key k="W" />:</label>
                <div className="flex gap-px">
                  <input id="boundary" disabled defaultValue="0" className={`h-[16px] w-[81px] ${field} ${mono}`} />
                  <Pick disabled />
                </div>
              </div>
            </Group>
          </div>
        </div>
        <div className="mt-[5px] pl-[6px]">
          <Check label="在上一个属性定义下对齐" k="A" disabled />
        </div>
        <div className="mt-[6px] flex justify-end">
          <button type="button" className={`${button} border-[#3c9fd0]`}>确定</button>
          <button type="button" className={`ml-[10px] ${button} border-[#8a8a8a]`}>取消</button>
          <button type="button" className={`ml-[19px] ${button} border-[#8a8a8a]`}>帮助<Key k="H" /></button>
        </div>
      </form>
      <svg viewBox="0 0 344 286" className="pointer-events-none absolute -top-px -left-px h-[286px] w-[344px] overflow-visible" aria-hidden="true">
        <g fill="#ee1c1c" stroke="#ee1c1c">
          <path d="M180 69l10-14" strokeWidth="1.800" /><path d="M194 49l-2 10-6-4z" />
          <path d="M182 90l6-11" strokeWidth="1.800" /><path d="M191 73l-1 10-6-3z" />
          <path d="M341 193l-11-8" strokeWidth="1.800" /><path d="M325 181l10 2-4 5z" />
        </g>
      </svg>
    </div>
  );
}

function Watermark() {
  return (
    <aside className="absolute right-[55px] bottom-[14px]">
      <div className="absolute -top-[7px] left-[76px] flex gap-[4px]">
        <span className="h-[12px] w-[12px] rounded-full bg-[#b5b5b5]" />
        <span className="mt-[2px] h-[12px] w-[12px] rounded-full bg-[#b5b5b5]" />
      </div>
      <div className="relative flex h-[85px] w-[180px] items-center bg-[#222f59] pl-[15px] text-[#d3d6df]">
        <svg viewBox="0 0 34 36" className="h-[36px] w-[34px] shrink-0" aria-hidden="true">
          <g fill="none" stroke="#d3d6df" strokeWidth="2.600" strokeLinecap="round" strokeLinejoin="round">
            <path d="M1.500 6v21q1 5 6 7" />
            <path d="M6.500 7q0-6 6-5l15 9q8 6 1 12L13 33q-6 2-6.500-4z" />
          </g>
          <path d="M13 12l8 5.500-8 5.500z" fill="#d3d6df" />
          <path d="M23 14v7" stroke="#d3d6df" strokeWidth="1.600" />
        </svg>
        <div className="ml-[11px]">
          <p className="text-[27px] leading-[28px] font-medium whitespace-nowrap">溜溜自学</p>
          <p className="pl-px font-['DejaVu_Sans',sans-serif] text-[12px] leading-[12px]">zixue.3D66.COM</p>
        </div>
      </div>
    </aside>
  );
}

function InputBar() {
  return (
    <aside className="absolute right-[2px] bottom-px flex h-[19px] w-[138px] items-center gap-[3px] rounded-[4px] bg-[#f8f9fb] pl-[9px] text-[#3b83d6]">
      <svg viewBox="0 0 20 18" className="h-[18px] w-[20px]" aria-hidden="true">
        <path d="M17 5Q5 2 5 7c0 4 11 1 11 5 0 5-11 4-14 2" fill="none" stroke="#e8714a" strokeWidth="3" />
      </svg>
      <span className="ml-[5px] text-[11px] leading-[14px] font-bold">中</span>
      <svg viewBox="0 0 90 16" className="h-[14px] w-[84px]" aria-hidden="true">
        <path d="M10 2q3 9-7 9 5 5 9 0 4-5-2-9z" fill="#3b83d6" />
        <circle cx="20" cy="5" r="1.800" fill="none" stroke="#3b83d6" strokeWidth="1.200" />
        <path d="M25 8q1 2-1 4" stroke="#3b83d6" strokeWidth="1.800" fill="none" />
        <path d="M32 4h13v9H32z" fill="#3b83d6" />
        <path d="M34 6.500h9M34 8.500h9M36 11h5" stroke="#fff" strokeDasharray="1.500 1" />
        <circle cx="55" cy="5" r="2.600" fill="#8a8a8a" />
        <path d="M51 14V9h8v5z" fill="#8a8a8a" />
        <path d="M67 14l7-7" stroke="#3b83d6" strokeWidth="3" />
        <path d="M79 5l-3 1-1-1 1-3q-5-1-5 4l3 3q5 0 5-4z" fill="#3b83d6" />
      </svg>
    </aside>
  );
}

export default function App() {
  return (
    <div className="relative flex min-h-screen flex-col overflow-hidden bg-[#666] font-['Open_Sans','Noto_Sans_CJK_SC',sans-serif] text-[9px] leading-[12px]">
      <Header />
      <Toolbars />
      <Workspace />
      <CommandLine />
      <StatusBar />
      <AttributeDialog />
      <InputBar />
      <Watermark />
    </div>
  );
}
